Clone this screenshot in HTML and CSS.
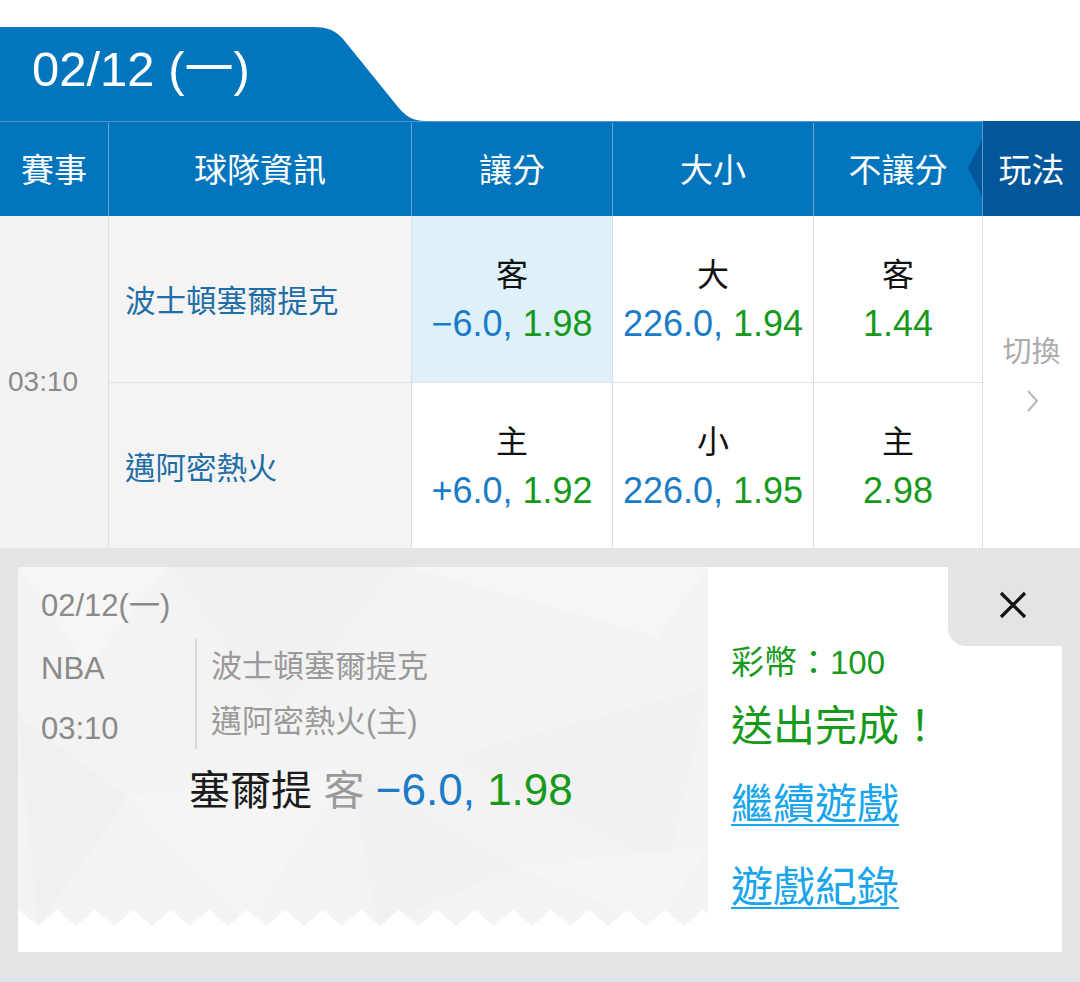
FILE: index.html
```html
<!doctype html>
<html lang="zh-Hant">
  <head>
    <meta charset="utf-8" />
    <title>投注完成</title>
    <link rel="stylesheet" href="styles.css">
  </head>

  <body>
    <div class="page">
      <!-- date tab -->
      <div class="title-bar">
        <div class="date-tab">02/12 (一)</div>
        <svg class="tab-slope" width="125" height="94" viewBox="0 0 125 94">
          <path d="M0 0H4C18 0 26 4 33 12L88 80C96 89 102 94 116 94H0Z" fill="#0275bd"/>
        </svg>
      </div>

      <!-- odds table header -->
      <div class="odds-head">
        <div class="hcell">賽事</div>
        <div class="hcell">球隊資訊</div>
        <div class="hcell">讓分</div>
        <div class="hcell">大小</div>
        <div class="hcell">不讓分</div>
        <div class="hcell play">玩法</div>
      </div>

      <!-- odds table body -->
      <div class="odds-body">
        <div class="time-cell">03:10</div>

        <div class="team">波士頓塞爾提克</div>
        <div class="odd selected">
          <span class="pick">客</span>
          <span class="val"><span class="line">−6.0,</span> <span class="rate">1.98</span></span>
        </div>
        <div class="odd">
          <span class="pick">大</span>
          <span class="val"><span class="line">226.0,</span> <span class="rate">1.94</span></span>
        </div>
        <div class="odd">
          <span class="pick">客</span>
          <span class="val"><span class="rate">1.44</span></span>
        </div>
        <div class="switch">
          <span>切換</span>
          <svg width="16" height="24" viewBox="0 0 16 24"><polyline points="4,2 13,12 4,22" fill="none" stroke="#b8b8b8" stroke-width="2"/></svg>
        </div>

        <div class="team row2">邁阿密熱火</div>
        <div class="odd row2">
          <span class="pick">主</span>
          <span class="val"><span class="line">+6.0,</span> <span class="rate">1.92</span></span>
        </div>
        <div class="odd row2">
          <span class="pick">小</span>
          <span class="val"><span class="line">226.0,</span> <span class="rate">1.95</span></span>
        </div>
        <div class="odd row2">
          <span class="pick">主</span>
          <span class="val"><span class="rate">2.98</span></span>
        </div>
      </div>

      <!-- bet result -->
      <div class="result-panel">
        <div class="ticket">
          <div class="ticket-info">
            <div class="ticket-main">
              <div class="ticket-date">02/12(一)</div>
              <div class="match">
                <div class="match-meta">
                  <div>NBA</div>
                  <div>03:10</div>
                </div>
                <div class="match-teams">
                  <div>波士頓塞爾提克</div>
                  <div>邁阿密熱火(主)</div>
                </div>
              </div>
              <div class="bet">塞爾提 <span class="side">客</span> <span class="num"><span class="line">−6.0,</span> <span class="rate">1.98</span></span></div>
            </div>
            <div class="ticket-foot"></div>
          </div>

          <div class="ticket-side">
            <div class="side-text">
              <div class="coins">彩幣：100</div>
              <div class="done">送出完成！</div>
              <a class="link first" href="#">繼續遊戲</a>
              <a class="link" href="#">遊戲紀錄</a>
            </div>
            <div class="close">
              <svg width="30" height="30" viewBox="0 0 30 30"><path d="M3 3L27 27M27 3L3 27" stroke="#111" stroke-width="3.2"/></svg>
            </div>
          </div>
        </div>
      </div>
    </div>
  </body>
</html>
```

FILE: styles.css
```css
* {
  box-sizing: border-box;
}

body {
  margin: 0;
  background-color: #fff;
  font-family: "Liberation Sans", "Noto Sans CJK TC", sans-serif;
}

.page {
  width: 1080px;
}

/* date tab */
.title-bar {
  display: flex;
  padding-top: 27px;
  height: 121px;
}

.date-tab {
  width: 310px;
  background-color: #0275bd;
  color: #fff;
  font-size: 49px;
  line-height: 56px;
  padding: 14px 0 0 32px;
  white-space: nowrap;
}

.tab-slope {
  display: block;
}

/* odds table */
.odds-head,
.odds-body {
  display: grid;
  grid-template-columns: 108px 303px 201px 201px 169px 98px;
}

.odds-head {
  height: 95px;
  background-color: #0275bd;
  box-shadow: inset 0 1px 0 #4f97cf;
}

.hcell {
  display: flex;
  align-items: center;
  justify-content: center;
  padding-bottom: 4px;
  color: #fff;
  font-size: 33px;
  border-left: 1px solid #6aa7d6;
  margin-top: 2px;
}

.hcell:first-child {
  border-left: none;
}

.hcell.play {
  position: relative;
  background-color: #02569a;
  margin-top: 0;
  padding-bottom: 2px;
  border-left-color: #5d97c6;
}

.hcell.play::before {
  content: "";
  position: absolute;
  left: -15px;
  top: 19px;
  border-right: 14px solid #02569a;
  border-top: 28px solid transparent;
  border-bottom: 28px solid transparent;
}

.odds-body {
  grid-template-rows: 166px 166px;
}

.odds-body > div {
  border-left: 1px solid #d2dee9;
}

.time-cell {
  grid-row: span 2;
  display: flex;
  align-items: center;
  padding-left: 8px;
  background-color: #f2f2f2;
  color: #8a8a8a;
  font-size: 28px;
  border-left: none !important;
}

.team {
  display: flex;
  align-items: center;
  padding-left: 16px;
  background-color: #f4f4f4;
  color: #1f6ea6;
  font-size: 30.5px;
}

.row2 {
  border-top: 1px solid #e2e2e2;
}

.odd {
  display: flex;
  flex-direction: column;
  align-items: center;
  justify-content: center;
  padding-top: 2px;
  background-color: #fff;
}

.odd.selected {
  background-color: #def1fb;
}

.pick {
  color: #111;
  font-size: 32px;
  line-height: 48px;
}

.val {
  font-size: 36px;
  line-height: 50px;
  white-space: nowrap;
}

.line {
  color: #1a7cc6;
}

.rate {
  color: #17991b;
}

.switch {
  grid-row: span 2;
  display: flex;
  flex-direction: column;
  align-items: center;
  justify-content: center;
  padding-bottom: 20px;
  color: #ababab;
  font-size: 29px;
  line-height: 40px;
}

.switch svg {
  margin-top: 17px;
}

/* bet result panel */
.result-panel {
  background-color: #e4e4e4;
  padding: 19px 18px 28px;
  border-bottom: 2px solid #d6e4ef;
}

.ticket {
  display: flex;
  height: 385px;
}

.ticket-info {
  width: 690px;
  display: flex;
  flex-direction: column;
}

.ticket-main {
  flex: 1;
  padding: 19px 0 0 23px;
  color: #8a8a8a;
  font-size: 31px;
  background-color: #f3f3f3;
  background-image:
    url("data:image/svg+xml,%3Csvg xmlns='http://www.w3.org/2000/svg' width='38' height='16'%3E%3Cpath d='M0 16L19 0L38 16Z' fill='white'/%3E%3C/svg%3E"),
    url("data:image/svg+xml,%3Csvg xmlns='http://www.w3.org/2000/svg' width='690' height='359'%3E%3Cpolygon points='0,0 150,0 70,100' fill='%23f6f6f6'/%3E%3Cpolygon points='150,0 380,0 260,150' fill='%23f1f1f1'/%3E%3Cpolygon points='390,0 690,0 640,70' fill='%23f6f6f6'/%3E%3Cpolygon points='0,150 110,230 20,359' fill='%23f0f0f0'/%3E%3Cpolygon points='110,230 330,200 230,359' fill='%23f5f5f5'/%3E%3Cpolygon points='430,190 690,120 650,300' fill='%23f1f1f1'/%3E%3Cpolygon points='330,200 500,300 360,359' fill='%23f1f1f1'/%3E%3Cpolygon points='500,300 690,280 640,359' fill='%23f5f5f5'/%3E%3C/svg%3E");
  background-repeat: repeat-x, no-repeat;
  background-position: 20px 100%, 0 0;
}

.ticket-foot {
  height: 26px;
  background-color: #fff;
}

.ticket-date {
  line-height: 40px;
}

.match {
  display: flex;
  align-items: flex-start;
  margin-top: 13px;
}

.match-meta {
  width: 154px;
  line-height: 60px;
}

.match-teams {
  border-left: 2px solid #d8d8d8;
  padding-left: 14px;
  line-height: 55px;
  color: #9a9a9a;
}

.bet {
  margin: 6px 0 0 148px;
  color: #1b1b1b;
  font-size: 41px;
  line-height: 50px;
  white-space: nowrap;
}

.bet .side {
  color: #9a9a9a;
}

.bet .num {
  font-size: 44px;
}

.ticket-side {
  flex: 1;
  display: flex;
  background-color: #fff;
}

.side-text {
  flex: 1;
  display: flex;
  flex-direction: column;
  align-items: flex-start;
  padding: 76px 0 0 23px;
  color: #17991b;
  white-space: nowrap;
}

.coins {
  font-size: 33px;
  line-height: 40px;
}

.done {
  margin-top: 19px;
  font-size: 42px;
  line-height: 50px;
}

.link {
  font-size: 42px;
  line-height: 50px;
  color: #19a5ec;
  text-decoration: underline;
  text-decoration-thickness: 2px;
  text-underline-offset: 5px;
  margin-top: 33px;
}

.link.first {
  margin-top: 28px;
}

.close {
  width: 114px;
  height: 79px;
  display: flex;
  align-items: center;
  justify-content: center;
  padding: 0 0 4px 16px;
  background-color: #e4e4e4;
  border-bottom-left-radius: 18px;
}
```
